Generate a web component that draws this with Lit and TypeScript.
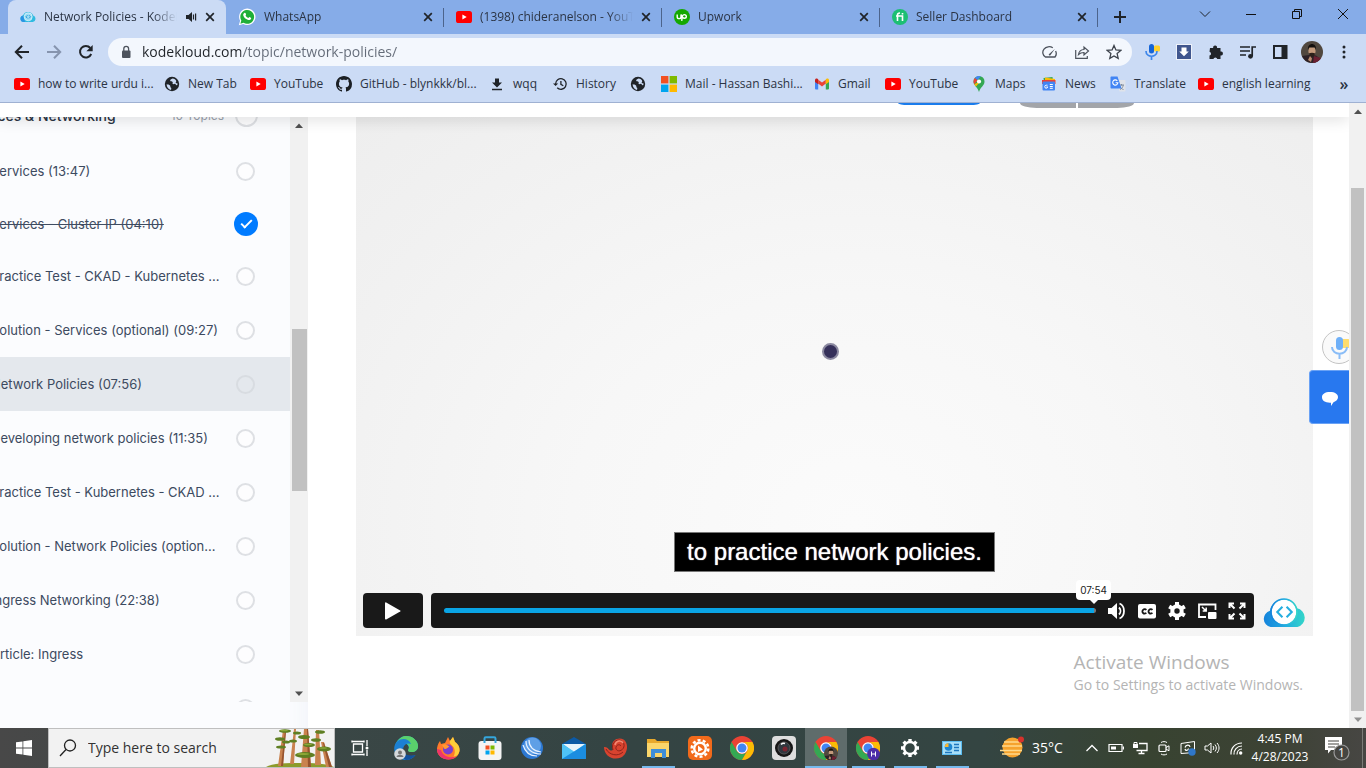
import { LitElement, html, svg, css, nothing, TemplateResult, SVGTemplateResult } from "lit";
import { customElement } from "lit/decorators.js";
import { classMap } from "lit/directives/class-map.js";
import { styleMap } from "lit/directives/style-map.js";

const icon = (size: number, box: number, body: SVGTemplateResult) => html`
  <svg width=${size} height=${size} viewBox="0 0 ${box} ${box}" fill="none" aria-hidden="true">${body}</svg>`;

const youtube = icon(16, 16, svg`
  <rect y="2" width="16" height="12" rx="2.6" fill="#f00"/><path d="M6.4 5.5v5L10.7 8z" fill="#fff"/>`);

const globe = icon(16, 16, svg`
  <circle cx="8" cy="8" r="7.2" fill="#202429"/>
  <path d="M2.6 8.2c1.4.2 2.6.3 3.4 1.2.8.8-.2 1.5.8 2.2.8.5.4 1.4.2 2.3C4.500 13.500 2.600 11 2.600 8.200z" fill="#cbdbf5"/>
  <path d="M8.600 2.600c-1.600.400-2.600 1.300-2.400 2.200.3 1 1.800.3 2.400 1.200.6.8-.6 1.500.2 2 .9.500 1.600-.6 2.600 0 .7.500.5 1.500 1.500 1.200.6-.3.600-1 .600-1.700-.7-.2-1.500 0-1.800-.7-.3-.8.800-.9.500-1.900-.4-1.200-2-2.300-3.600-2.300z" fill="#cbdbf5"/>`);

const cloudBody = (id: string) => svg`
  <defs><linearGradient id=${id} x1="0" y1="0" x2="1" y2="0">
    <stop offset="0" stop-color="#1583dc"/><stop offset=".55" stop-color="#24aee0"/><stop offset="1" stop-color="#34d6c8"/>
  </linearGradient></defs>
  <path d="M8 29a8 8 0 0 1-.6-15.600A13.500 13.500 0 0 1 33.500 11 9.200 9.200 0 0 1 34 29z" fill="url(#${id})"/>
  <circle cx="21" cy="14.500" r="12" fill="#fff"/>
  <circle cx="21" cy="14.500" r="12.600" stroke="url(#${id})" stroke-width="1.500"/>
  <path d="M19.500 9.500l-5 5 5 5M23.500 9.500l5 5-5 5" stroke="#24aee0" stroke-width="2"/>`;

const faviconCloud = icon(16, 16, svg`
  <path d="M3.600 13a3.300 3.300 0 0 1-.6-6.500A5.500 5.500 0 0 1 13.200 6.600 3.300 3.300 0 0 1 12.800 13z" fill="#2fbbe0"/>
  <path d="M3.600 13a3.300 3.300 0 0 1-.6-6.500l2 6.500z" fill="#2a93e4"/>
  <circle cx="8.200" cy="7.800" r="4" fill="#9fdcf3" stroke="#eaf9ff" stroke-width=".7"/>
  <path d="M7.500 6.200L6 7.800l1.500 1.600M9 6.200l1.500 1.600L9 9.400" stroke="#2a9ddc" stroke-width="1"/>`);

const whatsapp = icon(18, 18, svg`
  <path d="M.8 17.300l1.300-4.500A8.200 8.200 0 1 1 5.300 16z" fill="#fff"/>
  <path d="M2.400 15.700l.9-3.200a6.900 6.900 0 1 1 2.300 2.300z" fill="#1faf38"/>
  <path d="M6.300 5c.7-.5 1.300 0 1.700 1.200.2.700-.6 1-.3 1.500.6 1 1.300 1.700 2.500 2.200.5.200.8-1 1.300-.8 1.300.6 1.900 1 1.600 1.600-.5 1.200-1.900 1.600-3.400 1.100C7.600 11.100 6 9.500 5.300 7.500 5 6.500 5.500 5.500 6.300 5z" fill="#fff"/>`);

const upwork = icon(16, 16, svg`
  <circle cx="8" cy="8" r="8" fill="#14a800"/>
  <path d="M3.200 5.500v2.200c0 2.600 3.800 2.600 3.800 0V5.500c.8 2 1.700 3.700 3.300 3.700 2.700 0 2.700-3.600 0-3.600-2 0-2 1.600-2.600 6.200" stroke="#fff" stroke-width="1.400"/>`);

const fiverr = icon(16, 16, svg`
  <circle cx="8" cy="8" r="8" fill="#1dbf73"/>
  <path d="M5.500 12V6c0-1.600 1-2 2.500-2M4 7h6.500v5M10.500 4v1.500" stroke="#fff" stroke-width="1.600"/>`);

const closeX = icon(10, 10, svg`<path d="M1.200 1.200l7.600 7.600M8.800 1.200L1.200 8.800" stroke="#202429" stroke-width="1.700"/>`);

const chromeBody = svg`
  <circle cx="12" cy="12" r="12" fill="#ea4335"/>
  <path d="M1.600 6A12 12 0 0 0 12 24l5.200-9A6 6 0 0 1 6.800 15z" fill="#34a853"/>
  <path d="M22.400 6A12 12 0 0 1 12 24l5.200-9A6 6 0 0 0 12 6z" fill="#fbbc05"/>
  <circle cx="12" cy="12" r="5.800" fill="#fff"/><circle cx="12" cy="12" r="4.500" fill="#4285f4"/>`;

const portrait = (cx: number, cy: number, r: number) => svg`
  <circle cx=${cx} cy=${cy} r=${r} fill="#51483f"/>
  <g transform="translate(${cx} ${cy}) scale(${r / 11})">
    <path d="M-10 4A11 11 0 0 0 8.500 7L4 3.500-3 3z" fill="#2d2126"/>
    <path d="M2 4l7 2A11 11 0 0 1 1 11z" fill="#6b2032"/>
    <ellipse cx="0" cy="-1" rx="3.600" ry="5" fill="#c39a7c"/>
    <path d="M-4-2c-1-8 9-8 8 0L3-4.500h-6z" fill="#15110f"/>
    <path d="M-3.200 1.500C-2 6 2 6 3.200 1.500 1.500.5-1.500.5-3.200 1.500z" fill="#2c201a"/>
    <path d="M-2 4l2 2.500L-1 10l-3-2z" fill="#b98b6f"/>
  </g>`;

interface Tab { title: string; glyph: TemplateResult; active?: boolean; }
const tabs: Tab[] = [
  { title: "Network Policies - KodeKloud", glyph: faviconCloud, active: true },
  { title: "WhatsApp", glyph: whatsapp },
  { title: "(1398) chideranelson - YouTube", glyph: youtube },
  { title: "Upwork", glyph: upwork },
  { title: "Seller Dashboard", glyph: fiverr },
];

interface Bookmark { label: string; glyph: TemplateResult; width: number; }
const bookmarks: Bookmark[] = [
  { label: "how to write urdu i...", glyph: youtube, width: 150 },
  { label: "New Tab", glyph: globe, width: 86 },
  { label: "YouTube", glyph: youtube, width: 86 },
  { label: "GitHub - blynkkk/bl...", width: 153, glyph: icon(16, 16, svg`
    <path fill="#1b1f24" d="M8 0C3.580 0 0 3.580 0 8c0 3.540 2.290 6.530 5.470 7.590.4.070.55-.17.55-.38 0-.19-.01-.82-.01-1.490-2.010.37-2.530-.49-2.690-.94-.09-.23-.48-.94-.82-1.130-.28-.15-.68-.52-.01-.53.63-.01 1.080.58 1.230.82.72 1.210 1.870.87 2.330.66.070-.52.28-.87.51-1.070-1.780-.2-3.640-.89-3.640-3.950 0-.87.31-1.590.82-2.150-.08-.2-.36-1.020.08-2.120 0 0 .67-.21 2.200.82.64-.18 1.320-.27 2-.27s1.360.09 2 .27c1.530-1.040 2.200-.82 2.200-.82.44 1.100.16 1.920.08 2.120.51.56.82 1.270.82 2.150 0 3.070-1.870 3.750-3.650 3.950.29.25.54.73.54 1.480 0 1.070-.01 1.930-.01 2.200 0 .21.15.46.55.38A8.010 8.010 0 0 0 16 8c0-4.420-3.580-8-8-8z"/>`) },
  { label: "wqq", width: 63, glyph: icon(16, 16, svg`<path d="M6 2.500h4v4h3L8 11.500 3 6.500h3zM3 12.700h10v1.500H3z" fill="#202429"/>`) },
  { label: "History", width: 78, glyph: icon(16, 16, svg`
    <path d="M3.600 8A5.300 5.300 0 1 1 5.200 11.800M8.900 5v3.400l2.400 1.400" stroke="#202429" stroke-width="1.300"/><path d="M1 7.400h5.200L3.600 10z" fill="#202429"/>`) },
  { label: "", glyph: globe, width: 31 },
  { label: "Mail - Hassan Bashi...", width: 153, glyph: icon(16, 16, svg`
    <path d="M0 0h7.400v7.400H0z" fill="#f25022"/><path d="M8.600 0H16v7.400H8.600z" fill="#7fba00"/><path d="M0 8.600h7.400V16H0z" fill="#00a4ef"/><path d="M8.600 8.600H16V16H8.600z" fill="#ffb900"/>`) },
  { label: "Gmail", width: 71, glyph: icon(16, 16, svg`
    <path d="M1 4v8.600c0 .5.400.9.900.9h2.300V7.200z" fill="#4285f4"/><path d="M15 4v8.600c0 .5-.4.900-.9.900h-2.300V7.200z" fill="#34a853"/>
    <path d="M4.200 7.600V3.700L8 6.600l3.800-2.900v3.900L8 10.500z" fill="#ea4335"/><path d="M1 6V4c0-1.300 1.500-2 2.500-1.200l.7.500v5z" fill="#c5221f"/><path d="M15 6V4c0-1.300-1.500-2-2.500-1.200l-.7.500v5z" fill="#fbbc04"/>`) },
  { label: "YouTube", glyph: youtube, width: 86 },
  { label: "Maps", width: 70, glyph: icon(16, 16, svg`
    <path d="M8 0a5.500 5.500 0 0 0-5.500 5.500C2.500 9.500 6.600 11 8 16c1.400-5 5.500-6.500 5.500-10.500A5.500 5.500 0 0 0 8 0z" fill="#34a853"/>
    <path d="M8 0a5.500 5.500 0 0 0-4.200 2L6.500 4.200 9.800.3A5.500 5.500 0 0 0 8 0z" fill="#4285f4"/><path d="M3.800 2C2.200 3.800 2.100 6.500 3.300 8.300l3.200-4.100z" fill="#ea4335"/>
    <path d="M3.300 8.300l1.700 2.200 4.700-5.400z" fill="#fbbc04"/><circle cx="8" cy="5.500" r="2.100" fill="#fff"/>`) },
  { label: "News", width: 69, glyph: icon(16, 16, svg`
    <path d="M2.500 2l9-1 .5 5H3z" fill="#34a853"/><path d="M4 1.500l10 1.600V7H4z" fill="#fbbc04"/><path d="M1 4h13.500V8H1z" fill="#ea4335"/>
    <rect x="1.500" y="5.500" width="12.500" height="9" rx="1" fill="#4285f4"/><path d="M6.500 9.200H5.200a1.500 1.500 0 1 0 1.500 1.700H5.500M8.800 8.500h3M8.800 10.500h3M8.800 12.300h3" stroke="#fff"/>`) },
  { label: "Translate", width: 88, glyph: icon(16, 16, svg`
    <path d="M6 4h8.500c.6 0 1 .4 1 1v9.500c0 .6-.4 1-1 1H9.500z" fill="#dfe3ea"/><path d="M9 9h5M11.500 8v1.500M10 13.500c2-1 3-2.500 3.200-4.500M10 10.500c.6 1.500 1.700 2.500 3.500 3" stroke="#7b8796" stroke-width=".9"/>
    <path d="M1.500.5h6l4 12h-10c-.6 0-1-.4-1-1v-10c0-.6.400-1 1-1z" fill="#4285f4"/><path d="M7.300 4.800a2.600 2.600 0 1 0 .6 2H5.600" stroke="#fff" stroke-width="1.100"/>`) },
  { label: "english learning", glyph: youtube, width: 120 },
];

interface Lesson { title: string; done?: boolean; current?: boolean; }
const lessons: Lesson[] = [
  { title: "Services (13:47)" },
  { title: "Services - Cluster IP (04:10)", done: true },
  { title: "Practice Test - CKAD - Kubernetes ..." },
  { title: "Solution - Services (optional) (09:27)" },
  { title: "Network Policies (07:56)", current: true },
  { title: "Developing network policies (11:35)" },
  { title: "Practice Test - Kubernetes - CKAD ..." },
  { title: "Solution - Network Policies (option..." },
  { title: "Ingress Networking (22:38)" },
  { title: "Article: Ingress" },
  { title: "" },
];

@customElement("browser-chrome")
class BrowserChrome extends LitElement {
  static styles = css`
    :host { display: block; font: 12px/16px "Open Sans", "Noto Sans", sans-serif; color: #2b3444; }
    * { box-sizing: border-box; }
    svg { display: block; flex: none; }
    button { border: 0; padding: 0; background: none; font: inherit; color: inherit; display: flex; align-items: center; justify-content: center; }
    .strip { display: flex; height: 34px; background: #86ace8; padding-left: 8px; }
    .tab { flex: 0 1 218px; min-width: 0; display: flex; align-items: center; gap: 8px; padding: 0 11px 0 12px; position: relative; }
    .tab:not(.active)::after { content: ""; position: absolute; right: 0; top: 8px; height: 19px; width: 1px; background: #4c648c; }
    .tab.active { background: #cbdbf5; border-radius: 8px 8px 0 0; }
    .name { flex: 1; overflow: hidden; white-space: nowrap; mask-image: linear-gradient(to right, #000 calc(100% - 24px), transparent); }
    .plus { width: 44px; }
    .window { display: flex; margin-left: auto; }
    .window button { width: 46px; height: 28px; }
    .bar { display: flex; height: 36px; align-items: center; background: #cbdbf5; padding-left: 6px; }
    .nav { width: 32px; height: 32px; }
    .omni { flex: 1; height: 28px; margin: 0 4px 0 6px; border-radius: 14px; background: #f3f7fd; display: flex; align-items: center; padding-left: 10px; }
    .omni input { flex: 1; min-width: 0; border: 0; outline: 0; padding: 0; margin-left: 8px; font: 14px/20px "Open Sans", "Noto Sans", sans-serif;
      color: transparent; background: linear-gradient(to right, #202429 99px, #636b78 99px); background-clip: text; -webkit-background-clip: text; }
    .omni button { width: 32px; height: 28px; }
    .omni button:last-child { margin-right: 2px; }
    .ext { width: 32px; height: 32px; }
    .menu { margin-right: 6px; }
    .marks { display: flex; height: 33px; background: #cbdbf5; border-bottom: 1px solid #9fb1d2; padding: 0 8px 4px 14px; align-items: center; }
    .mark { display: flex; gap: 8px; align-items: center; color: inherit; text-decoration: none; white-space: nowrap; flex: none; }
    .more { margin-left: auto; width: 28px; font-size: 16px; font-weight: 600; }
  `;

  render() {
    const nav = (label: string, path: string, color = "#202429") => html`
      <button class="nav" aria-label=${label}>${icon(16, 16, svg`<path d=${path} stroke=${color} stroke-width="2"/>`)}</button>`;
    return html`
      <div class="strip">
        ${tabs.map((t) => html`
          <div class=${classMap({ tab: true, active: !!t.active })}>
            ${t.glyph}<span class="name">${t.title}</span>
            ${t.active ? icon(12, 12, svg`<path d="M1 4h2.500L7 1v10L3.500 8H1z" fill="#202429"/><path d="M8.500 3.500v5M10.600 2.500v7" stroke="#202429" stroke-width="1.200"/>`) : nothing}
            <button aria-label="Close ${t.title}">${closeX}</button>
          </div>`)}
        <button class="plus" aria-label="New tab">${icon(12, 12, svg`<path d="M6 0v12M0 6h12" stroke="#202429" stroke-width="2"/>`)}</button>
        <div class="window">
          <button aria-label="Search tabs">${icon(12, 12, svg`<path d="M1 3.500l5 5 5-5" stroke="#202429"/>`)}</button>
          <button aria-label="Minimize">${icon(10, 10, svg`<path d="M0 5.500h10" stroke="#111"/>`)}</button>
          <button aria-label="Restore">${icon(10, 10, svg`<path d="M.5 2.500h7v7h-7zM2.500 2.500v-2h7v7h-2" stroke="#111"/>`)}</button>
          <button aria-label="Close window">${icon(10, 10, svg`<path d="M0 0l10 10M10 0L0 10" stroke="#111"/>`)}</button>
        </div>
      </div>
      <div class="bar">
        ${nav("Back", "M15 8H2.500M8 1.800L1.800 8 8 14.200")}
        ${nav("Forward", "M1 8h12.500M8 1.800L14.200 8 8 14.200", "#8694ae")}
        <button class="nav" aria-label="Reload">${icon(16, 16, svg`<path d="M13.200 10A5.800 5.800 0 1 1 12.300 4" stroke="#202429" stroke-width="2"/><path d="M14.700 1v6.300H8.400z" fill="#202429"/>`)}</button>
        <div class="omni">
          ${icon(16, 16, svg`<rect x="4" y="6.500" width="8.500" height="7.500" rx="1" fill="#4d535d"/><path d="M5.800 7V4.800a2.400 2.400 0 0 1 4.800 0V7" stroke="#4d535d" stroke-width="1.300"/>`)}
          <input aria-label="Address" value="kodekloud.com/topic/network-policies/" />
          <button aria-label="Page speed">${icon(16, 16, svg`<path d="M10.800 3.800A6.200 5.600 0 0 0 3.400 13h9.600A5.600 5.600 0 0 0 13.600 7" stroke="#4d535d" stroke-width="1.300"/><path d="M6.800 10.200l6-5.200-4.600 6.400a1 1 0 0 1-1.400-1.200z" fill="#4d535d"/>`)}</button>
          <button aria-label="Share">${icon(16, 16, svg`<path d="M1.700 6v8.300h11.600V12M4.500 10.500c.5-3.200 2-4.800 5.500-5V3l4.500 4L10 11V8.500c-2.500 0-4 .5-5.500 2z" stroke="#4d535d" stroke-width="1.200"/>`)}</button>
          <button aria-label="Bookmark">${icon(16, 16, svg`<path d="M8 1.500l1.900 4.500 4.900.4-3.700 3.200 1.100 4.800L8 11.900l-4.200 2.500 1.100-4.800L1.200 6.400 6.100 6z" stroke="#3c424b" stroke-width="1.300"/>`)}</button>
        </div>
        <button class="ext" aria-label="Voice typing">${icon(16, 16, svg`<rect x="10" y="1.500" width="6" height="6" rx="1.500" fill="#ffd12e"/><rect x="5" y="0" width="5" height="9.500" rx="2.500" fill="#1565d8"/><path d="M2 7c0 7 11 7 11 0M7.500 12.300V16" stroke="#3d86ea" stroke-width="1.700"/>`)}</button>
        <button class="ext" aria-label="Downloader">${icon(16, 16, svg`<rect x=".5" y=".5" width="15" height="15" fill="#40568e" stroke="#eef2fa"/><path d="M5.500 3.500h5v4h2.300L8 12.200 3.200 7.500h2.300z" fill="#fff"/>`)}</button>
        <button class="ext" aria-label="Extensions">${icon(16, 16, svg`<path d="M2 4h3.200a2 2 0 1 1 3.800 0h3.500v3.500a2 2 0 1 1 0 3.900V15H9.300a2 2 0 0 0-3.900 0H1.500v-3.400a2 2 0 0 0 0-3.900z" fill="#202429"/>`)}</button>
        <button class="ext" aria-label="Media">${icon(16, 16, svg`<path d="M0 3h10M0 7h10M0 11h6M12.200 12V3H16" stroke="#202429" stroke-width="1.700"/><circle cx="10.500" cy="12.300" r="2.400" fill="#202429"/>`)}</button>
        <button class="ext" aria-label="Side panel">${icon(16, 16, svg`<rect x="2" y="2" width="12.500" height="12" stroke="#202429" stroke-width="2"/><path d="M9.500 2h5v12h-5z" fill="#202429"/>`)}</button>
        <button class="ext" aria-label="Profile">${icon(22, 22, portrait(11, 11, 11))}</button>
        <button class="ext menu" aria-label="Menu">${icon(16, 16, svg`<circle cx="8" cy="3" r="1.500" fill="#202429"/><circle cx="8" cy="8" r="1.500" fill="#202429"/><circle cx="8" cy="13" r="1.500" fill="#202429"/>`)}</button>
      </div>
      <nav class="marks">
        ${bookmarks.map((b) => html`<a class="mark" href="#" aria-label=${b.label || "Bookmark"} style=${styleMap({ width: `${b.width}px` })}>${b.glyph}<span>${b.label}</span></a>`)}
        <button class="more" aria-label="More bookmarks">»</button>
      </nav>`;
  }
}

@customElement("lesson-list")
class LessonList extends LitElement {
  static styles = css`
    :host { display: flex; flex-direction: column; flex: 0 0 308px; background: #fbfcfe; padding-bottom: 26px; font: 13px/20px Inter, sans-serif; color: #3c4a60; min-height: 0; box-shadow: inset -24px 0 18px -18px #f3f5fa; }
    * { box-sizing: border-box; }
    .scroller { flex: 1; min-height: 0; display: flex; overflow: hidden; }
    .items { flex: 1; min-width: 0; overflow: hidden; }
    .row { height: 54px; display: flex; align-items: center; padding-right: 35px; }
    .row.done { height: 51px; }
    .row.current { background: #e4e8ed; }
    .row a { flex: 1; margin-left: -9px; color: inherit; text-decoration: none; white-space: nowrap; }
    .row.done a { text-decoration: line-through; color: #3f4c61; }
    .row.head { height: 27px; font-size: 14px; color: #2b3444; margin-top: -15px; margin-bottom: 15px; }
    .row.head a { margin-left: -37px; font-weight: 500; }
    .count { font-size: 12px; color: #9aa1ac; margin-right: 11px; }
    input { appearance: none; flex: none; margin: 0; width: 19px; height: 19px; border: 2px solid #dee0e4; border-radius: 50%; background: #fdfdfe; }
    .head input { width: 23px; height: 23px; margin-right: -3px; }
    .current input { background: none; border-color: #d8dce1; }
    input:checked { width: 24px; height: 24px; border: 0; background: #007bff; display: grid; place-items: center; margin-right: -3px; }
    input:checked::before { content: ""; box-sizing: border-box; width: 11px; height: 6px; border: solid #fff; border-width: 0 0 2px 2px; transform: rotate(-45deg) translate(1px, -1px); }
    .track { flex: 0 0 18px; background: #f1f1f1; display: flex; flex-direction: column; align-items: center; }
    .space { flex: 195; }
    .thumb { flex: 162; width: 15px; background: #c1c1c1; }
    .rest { flex: 194; }
    .arrow { height: 17px; width: 17px; display: grid; place-items: center; }
  `;
  render() {
    return html`
      <div class="scroller">
        <div class="items">
          <div class="row head"><a href="#">Services &amp; Networking</a><span class="count">10 Topics</span><input type="checkbox" aria-label="Services and Networking complete" /></div>
          ${lessons.map((l) => html`
            <div class=${classMap({ row: true, done: !!l.done, current: !!l.current })}>
              <a href="#">${l.title}</a><input type="checkbox" .checked=${!!l.done} aria-label="${l.title || "Lesson"} complete" />
            </div>`)}
        </div>
        <div class="track">
          <div class="arrow">${icon(8, 8, svg`<path d="M4 1.500L8 6H0z" fill="#505050"/>`)}</div>
          <div class="space"></div><div class="thumb"></div><div class="rest"></div>
          <div class="arrow">${icon(8, 8, svg`<path d="M4 6L0 1.500h8z" fill="#505050"/>`)}</div>
        </div>
      </div>`;
  }
}

@customElement("lesson-video")
class LessonVideo extends LitElement {
  static styles = css`
    :host { display: flex; flex-direction: column; position: relative; height: 519px; background: radial-gradient(ellipse at 52% 78%, #fbfbfb 0, #f7f7f7 40%, #f1f1f1 78%, #eeeeee 100%); }
    * { box-sizing: border-box; }
    svg { display: block; }
    button { border: 0; padding: 0; background: none; display: grid; place-items: center; }
    .pointer { position: absolute; left: 466px; top: 226px; width: 17px; height: 17px; border-radius: 50%; background: #35305a; border: 2px solid #8b89a0; }
    .caption { margin: auto auto 21px; border: 1px solid #777; background: #000; color: #fff; font: 24px/38px "Liberation Sans", Arial, sans-serif; padding: 0 12px; text-shadow: 0 0 1px #fff; }
    .controls { display: flex; align-items: center; padding: 0 7px 8px; }
    .play { width: 60px; height: 35px; border-radius: 4px; background: #191919; margin-right: 8px; }
    .bar { flex: 1; height: 35px; border-radius: 4px; background: #191919; display: flex; align-items: center; padding: 0 2px 0 13px; position: relative; }
    .seek { flex: 1; position: relative; display: flex; margin-right: 6px; }
    .seek input { appearance: none; width: 100%; height: 5px; margin: 0; border-radius: 3px; background: linear-gradient(to right, #0aa5e6 calc(100% - 2px), #777 calc(100% - 2px)); }
    .seek input::-webkit-slider-thumb { appearance: none; width: 1px; height: 1px; background: transparent; }
    .time { position: absolute; right: -15px; bottom: 13px; background: #fff; color: #222; border-radius: 4px; padding: 0 4px; font: 10px/20px Inter, sans-serif; }
    .time::after { content: ""; position: absolute; left: 50%; top: 100%; margin-left: -4px; border: 4px solid transparent; border-top-color: #fff; border-bottom: 0; }
    .bar button { width: 30px; height: 35px; }
    .brand { margin-left: 8px; margin-top: 4px; }
  `;
  render() {
    return html`
      <span class="pointer"></span>
      <div class="caption">to practice network policies.</div>
      <div class="controls">
        <button class="play" aria-label="Play">${icon(20, 20, svg`<path d="M2 2.200v15.600c0 .7.600 1 1.200.7l14-8c.5-.3.500-.8 0-1.100l-14-8C2.600 1.100 2 1.500 2 2.200z" fill="#fff"/>`)}</button>
        <div class="bar">
          <div class="seek"><input type="range" aria-label="Progress" max="476" value="474" /><span class="time">07:54</span></div>
          <button aria-label="Volume">${icon(20, 20, svg`<path d="M1 7h3.500L10 2v16l-5.500-5H1z" fill="#fff"/><path d="M12 6.500c2 2 2 5 0 7M12.500 2.500c6 2.500 6 12.500 0 15" stroke="#fff" stroke-width="1.800"/>`)}</button>
          <button aria-label="Captions">${icon(20, 20, svg`<rect x="1" y="3" width="18" height="14.500" rx="2" fill="#fff"/><path d="M9.300 9a2.200 2.200 0 1 0 0 2.800M15.400 9a2.200 2.200 0 1 0 0 2.800" stroke="#191919" stroke-width="1.800"/>`)}</button>
          <button aria-label="Settings">${icon(20, 20, svg`<circle cx="10" cy="10" r="4.700" stroke="#fff" stroke-width="4"/><path d="M10 1v4M10 15v4M2.200 5.500l3.500 2M14.300 12.500l3.500 2M17.800 5.500l-3.500 2M5.700 12.500l-3.500 2" stroke="#fff" stroke-width="4"/>`)}</button>
          <button aria-label="Picture in picture">${icon(20, 20, svg`<path d="M9 16H2V3.500h16.500V9" stroke="#fff" stroke-width="1.800"/><rect x="11" y="11" width="8.500" height="7" rx="1" fill="#fff"/><path d="M5 6l4 4M9.200 6.500V10H5.700" stroke="#fff" stroke-width="1.500"/>`)}</button>
          <button aria-label="Fullscreen">${icon(20, 20, svg`<path d="M2.500 7V2.500H7M13 2.500h4.500V7M17.500 13v4.500H13M7 17.500H2.500V13M2.500 2.500l5 5M17.500 2.500l-5 5M17.500 17.500l-5-5M2.500 17.500l5-5" stroke="#fff" stroke-width="2"/>`)}</button>
        </div>
        <svg class="brand" width="44" height="31" viewBox="0 0 42 30" fill="none" aria-hidden="true">${cloudBody("cloud")}</svg>
      </div>`;
  }
}

@customElement("task-bar")
class TaskBar extends LitElement {
  static styles = css`
    :host { display: flex; height: 40px; background: linear-gradient(to right, #484848 0, #3b4746 22%, #344443 45%, #344542 72%, #384331 84%, #3c4234 93%, #474643 100%); color: #fff; font: 12px/16px "Open Sans", "Noto Sans", sans-serif; }
    * { box-sizing: border-box; }
    svg { display: block; }
    button { border: 0; padding: 0; background: none; color: inherit; font: inherit; display: grid; place-items: center; flex: none; }
    .start { width: 48px; }
    .search { flex: 0 0 287px; display: flex; align-items: center; background: #f2f2f2; border: 1px solid #bfbfbf; padding-left: 10px; }
    .search input { flex: 1; min-width: 0; border: 0; outline: 0; background: none; padding: 0; margin-left: 11px; font: 14px/20px "Open Sans", "Noto Sans", sans-serif; }
    .search input::placeholder { color: #333; opacity: 1; }
    .apps { display: flex; flex: 1; }
    .apps button { width: 42px; position: relative; }
    .apps button:first-child { width: 50px; }
    .open::after { content: ""; position: absolute; left: 5px; right: 4px; bottom: 0; height: 2px; background: #76b9ed; }
    .front { background: #5f6c6b; }
    .front::after { left: 0; right: 0; }
    .weather { display: flex; align-items: center; gap: 8px; font-size: 14px; width: 80px; }
    .tray { display: flex; }
    .tray button { width: 24px; }
    .clock { width: 64px; text-align: center; }
    .clock span { display: block; line-height: 18px; }
    .note { width: 50px; }
    .peek { width: 4px; border-left: 1px solid #7b7b77; }
  `;

  render() {
    const tray = (label: string, body: SVGTemplateResult) => html`<button aria-label=${label}>${icon(16, 16, body)}</button>`;
    const app = (label: string, body: SVGTemplateResult, state = "") => html`<button class=${state} aria-label=${label}>${icon(24, 24, body)}</button>`;
    return html`
      <button class="start" aria-label="Start">${icon(16, 16, svg`<path d="M0 2.300l6.500-.9v6.100H0zM7.300 1.300L16 0v7.500H7.300zM0 8.400h6.500v6.200L0 13.700zM7.300 8.400H16V16l-8.700-1.200z" fill="#fff"/>`)}</button>
      <label class="search">
        ${icon(18, 18, svg`<circle cx="11" cy="6.500" r="5.500" stroke="#222" stroke-width="1.300"/><path d="M7 10.500L1 17" stroke="#222" stroke-width="1.300"/>`)}
        <input aria-label="Search" placeholder="Type here to search" />
        <svg width="68" height="38" viewBox="0 0 68 38" fill="none" aria-hidden="true">
          <path d="M0 38c6-4 20-4 38-4 14 0 24 1 30 4z" fill="#8c9b2b"/>
          <path d="M12 37L17 1h3l-3 36zM24 35L28 0h2l-2 35zM35 38L38 0h4l3 38zM49 36L50 1h3l2 35zM60 38L55 13h3l8 25z" fill="#c9824e"/>
          <path d="M41 0h1l3 38h-3zM19 2h1l-3 35h-2zM57 14h1l8 24h-3z" fill="#96532e"/>
          <g fill="#5f7f22"><ellipse cx="19" cy="2" rx="6" ry="1.800"/><ellipse cx="14" cy="10" rx="5" ry="1.800"/><ellipse cx="20" cy="13" rx="4" ry="1.500"/><ellipse cx="15" cy="18" rx="5" ry="1.600"/><ellipse cx="31" cy="4" rx="4" ry="1.500"/><ellipse cx="27" cy="12" rx="4" ry="1.600"/><ellipse cx="38" cy="8" rx="6" ry="2"/><ellipse cx="43" cy="16" rx="6" ry="2"/><ellipse cx="39" cy="26" rx="10" ry="3"/><ellipse cx="54" cy="3" rx="5" ry="1.800"/><ellipse cx="50" cy="11" rx="5" ry="1.800"/><ellipse cx="58" cy="20" rx="7" ry="2.400"/></g>
          <g fill="#8da838"><ellipse cx="18" cy="1.500" rx="4" ry=".8"/><ellipse cx="42" cy="15.500" rx="4" ry=".8"/><ellipse cx="37" cy="25" rx="6" ry="1"/><ellipse cx="57" cy="19" rx="4" ry=".8"/></g>
        </svg>
      </label>
      <div class="apps">
        ${app("Task view", svg`<path d="M5.500 8h9v8h-9zM4 4.500v2M4 5.500h12M4 19.500v-2M4 18.500h12M16 4.500v2M16 17.500v2M19 4v6M19 14v6" stroke="#fff" stroke-width="1.300"/><circle cx="19" cy="12" r="1.500" fill="#fff"/>`)}
        ${app("Edge", svg`<path d="M1 11C2 4 7 0 12 0c7 0 12 5 12 10 0 4-3 6-6.500 6-3 0-4-1.300-3-2.700C16 10.500 13 7 9 7c-4 0-7 2-8 4z" fill="#38c8b8"/><path d="M12 0c7 0 12 5 12 10 0 4-3 6-6.500 6-3 0-4-1.300-3-2.700C17 9 13 4 5 4c2-2.500 4-4 7-4z" fill="#5ad06c"/><path d="M.2 12C1 2 14 0 17 8c-7-3-10 6-6.500 10 3 2.500 8 2.500 11 1C19 22.500 15.500 24 12 24 5 24 0 19 .2 12z" fill="#1c80d4"/><path d="M9 11c-2 6 4 10 12.500 8C19 22.500 15.500 24 12 24c-4-2-6-8-3-13z" fill="#12519c"/><circle cx="6" cy="18" r="5.800" fill="#d5d9dc"/><circle cx="6" cy="16.500" r="2" fill="#777"/><path d="M2.500 21c.5-3 6.500-3 7 0z" fill="#777"/>`)}
        ${app("Firefox", svg`<path d="M12 1l2 4 3-4 2 5c3 2 5 5 4.500 9-.8 5-5 8.500-11 8.500S1.500 19.500 1 14.500c-.3-3.500 1-7 3-9.500l1 3 4-1z" fill="#ff7a2a"/><path d="M17 1l2 5c3 2 5 5 4.500 9-1 4-3 5-6 6 2-4 2-9-2-12-2-2-2-3-1.500-4z" fill="#ffcf3a"/><path d="M1 13c0 6 5 10.500 11.500 10.500 3 0 6-1 7.500-3-6 2-13 0-15-6.500z" fill="#f0336c"/><circle cx="12" cy="13.500" r="5" fill="#7a3fd0"/><path d="M6 9c3-2 6 0 7.500 2-2 0-2 2-5 2z" fill="#ff9a30"/>`)}
        ${app("Store", svg`<rect x=".5" y="5" width="23" height="19" rx="3" fill="#f4f4f4"/><path d="M6.500 7V2.500c0-.8.500-1.300 1.300-1.300h8.400c.8 0 1.300.5 1.300 1.300V7" stroke="#35a6dc" stroke-width="2"/><path d="M7.500 9.500h4v4h-4z" fill="#f25022"/><path d="M12.500 9.500h4v4h-4z" fill="#7fba00"/><path d="M7.500 14.500h4v4h-4z" fill="#00a4ef"/><path d="M12.500 14.500h4v4h-4z" fill="#ffb900"/>`)}
        ${app("Downloader", svg`<circle cx="12" cy="12" r="11" fill="#2c78d2"/><circle cx="12.500" cy="10" r="8.500" fill="#5f9fe6"/><path d="M6 5c0 8 6 13 15 13M9 4c0 7 5 11 12 12M3 9c2 7 7 11 14 11" stroke="#eaf3ff" stroke-width="1.200"/>`)}
        ${app("Mail", svg`<path d="M0 8l12-7 12 7v3H0z" fill="#0c5aa6"/><path d="M0 8h24v15H0z" fill="#35b4f0"/><path d="M1 8h22L12 16z" fill="#e8f4fc"/><path d="M0 8v15L24 8 12 15.500z" fill="#4fc3f7"/><path d="M0 23L24 8v15z" fill="#1b8de0"/>`)}
        ${app("Nautilus", svg`<path d="M0 11c4-1 5 5 9 3C5 5 14 0 19.500 3.500 25 7 24 18 17 21.500 9 25 0 20 0 11z" fill="#d8432f"/><path d="M9 14c-3-8 6-13 10-8 4 6-4 12-7 7-1-3 3-6 5-3M2 13c3 6 12 8 17 3" stroke="#8e231a"/><path d="M11 9c1-5 7-5 8-2" stroke="#f58a73" stroke-width="1.500"/>`)}
        ${app("File Explorer", svg`<path d="M1 3h8l2 2h12v16H1z" fill="#e8a92c"/><path d="M1 7h22v14H1z" fill="#fbd66b"/><path d="M5 22v-9h15v9h-4v-5H9v5z" fill="#3e8ed8"/>`, "open")}
        ${app("Video editor", svg`<rect width="24" height="24" rx="5" fill="#f26a1b"/><circle cx="12" cy="12.500" r="8.300" stroke="#fff" stroke-width="2.500" stroke-dasharray="3 2.200"/><circle cx="12" cy="12.500" r="5.800" stroke="#fff" stroke-width="2.400"/><path d="M10 9.500l5 4-5 2.500z" fill="#fff"/>`)}
        ${app("Chrome", chromeBody)}
        ${app("Camera", svg`<rect width="24" height="24" rx="4" fill="#dedede"/><circle cx="12" cy="12" r="9" fill="#161616"/><circle cx="12" cy="12" r="6" fill="#30383f" stroke="#555"/><path d="M9 8.500a4 4 0 0 1 4-1" stroke="#fff" stroke-width="1.500"/><circle cx="13" cy="13" r="2.500" fill="#7b2530"/>`)}
        ${app("Chrome profile 1", svg`${chromeBody}${portrait(17, 17.5, 7)}`, "open front")}
        ${app("Chrome profile 2", svg`${chromeBody}<circle cx="17.500" cy="18" r="6.300" fill="#4d2da8"/><path d="M15.500 15.500v5M19.500 15.500v5M15.500 18h4" stroke="#fff"/>`, "open")}
        ${app("Settings", svg`<circle cx="12" cy="12" r="6" stroke="#fff" stroke-width="2.400"/><path d="M12 3v3M12 18v3M3 12h3M18 12h3M5.600 5.600l2.200 2.200M16.200 16.200l2.200 2.200M18.400 5.600l-2.200 2.200M7.800 16.200l-2.200 2.200" stroke="#fff" stroke-width="3.400"/>`, "open")}
        ${app("Control panel", svg`<rect x="2" y="5" width="20" height="14" fill="#5bbcf0"/><rect x="3" y="6" width="18" height="12" fill="#a7dff9"/><circle cx="8.500" cy="11" r="3.800" fill="#1e86cf"/><path d="M8.500 11V7.200A3.800 3.800 0 0 0 4.700 11z" fill="#f7b733"/><path d="M14 8.500h5M14 11.500h5M14 14.500h5M5 16.500h7" stroke="#1e76bd" stroke-width="1.300"/>`, "open")}
      </div>
      <div class="weather">
        ${icon(24, 24, svg`<circle cx="12.500" cy="11.500" r="10" fill="#f6a32d"/><path d="M4 6h15M2 10h20M0 14.500h22M2 18h18" stroke="#ffd98a" stroke-width="1.700"/><circle cx="21" cy="3.500" r="3" fill="#d6322c"/>`)}
        <span>35°C</span>
      </div>
      <div class="tray">
        ${tray("Hidden icons", svg`<path d="M2.500 11L8 5.500l5.500 5.500" stroke="#fff" stroke-width="1.300"/>`)}
        ${tray("Battery", svg`<path d="M1 4.500h13v7H1zM15.500 6.500v3" stroke="#fff" stroke-width="1.200"/><path d="M3 6.500h5v3H3z" fill="#fff"/>`)}
        ${tray("Display", svg`<path d="M7 3.500h8v7H4.500M9.500 10.500v3M6.500 13.500h6" stroke="#fff" stroke-width="1.300"/><rect x="1" y="4" width="5" height="4" fill="#fff"/><path d="M2 4V2.500h3V4" stroke="#fff"/>`)}
        ${tray("Meet now", svg`<rect x="3" y="5" width="7" height="6.500" rx="1" stroke="#fff" stroke-width="1.200"/><path d="M10 7.500l3-1.700v5l-3-1.700M5 2.500c2-1.200 4-1.200 6 0M5 14c2 1.200 4 1.200 6 0" stroke="#fff"/>`)}
        ${tray("Sync", svg`<path d="M1 3.500L14.500 1.500v11L1 13.500z" stroke="#fff"/><path d="M5 7.500C6 4.500 9.500 4.500 10 7M8.500 8.500C8 11 5.500 11 5 9" stroke="#fff" stroke-width="1.200"/><circle cx="12" cy="12" r="3.700" fill="#2f77c9"/>`)}
        ${tray("Volume", svg`<path d="M1 6h2.500L7 3v10L3.500 10H1z" stroke="#fff"/><path d="M9 6c1 1.200 1 2.800 0 4M11 4.500c1.800 2 1.800 5 0 7M13 3c2.700 3 2.700 7 0 10" stroke="#fff"/>`)}
        ${tray("Network", svg`<path d="M3 14.500C2.500 8 7 3 14 3M6 14.500C5.500 10 9 6 14 6M9 14.500C9 11.500 11 9 14 9" stroke="#fff" stroke-width="1.200"/><circle cx="12.700" cy="13" r="1.700" fill="#fff"/>`)}
      </div>
      <button class="clock"><div><span>4:45 PM</span><span>4/28/2023</span></div></button>
      <button class="note" aria-label="1 new notification">
        <svg width="26" height="26" viewBox="0 0 26 26" fill="none" aria-hidden="true"><path d="M1 2h17v13H7l-3 3.500V15H1z" fill="#fff"/><path d="M4 6h11M4 9h11M4 12h7" stroke="#454541" stroke-width="1.200"/><circle cx="17.500" cy="17.500" r="7.500" fill="#454541" stroke="#999" stroke-width="1.200"/><text x="17.500" y="22" text-anchor="middle" font-size="12" fill="#fff">1</text></svg>
      </button>
      <div class="peek"></div>`;
  }
}

@customElement("app-root")
class AppRoot extends LitElement {
  static styles = css`
    :host { display: flex; flex-direction: column; height: 100vh; overflow: hidden; background: #fff; }
    * { box-sizing: border-box; }
    svg { display: block; }
    .view { flex: 1; min-height: 0; display: flex; }
    .site { flex: 1; min-width: 0; display: flex; flex-direction: column; position: relative; overflow: hidden; }
    .top { flex: none; height: 14px; background: #fff; box-shadow: 0 2px 16px rgba(0, 0, 0, 0.14); position: relative; z-index: 1; display: flex; justify-content: flex-end; align-items: flex-start; padding-right: 215px; }
    .pill { width: 82px; height: 2px; background: #1a7cec; border-radius: 0 0 20px 20px / 0 0 4px 4px; margin-right: 40px; }
    .half { width: 56px; height: 5px; background: #a3a5a9; border-radius: 0 0 0 20px / 0 0 0 6px; }
    .half + .half { border-radius: 0 0 20px 0 / 0 0 6px 0; margin-left: 2px; }
    .body { flex: 1; min-height: 0; display: flex; }
    .main { flex: 1; min-width: 0; padding: 0 36px 0 48px; }
    .voice { position: absolute; right: -7px; top: 227px; width: 34px; height: 34px; border: 1px solid #c4c4c4; border-radius: 50%; background: #fafafa; padding: 0; display: grid; place-items: center; }
    .chat { position: absolute; right: 0; top: 267px; width: 40px; height: 54px; border: 1px solid #6aa2f5; border-right: 0; border-radius: 4px 0 0 4px; background: #2878ef; padding: 2px 0 0; display: grid; place-items: center; }
    .track { flex: 0 0 17px; background: #f1f1f1; display: flex; flex-direction: column; align-items: center; }
    .arrow { height: 17px; display: grid; place-items: center; }
    .space { flex: 68; }
    .thumb { flex: 523; width: 13px; background: #c1c1c1; }
    .notice { position: absolute; right: 46px; bottom: 32px; color: #b4b4b4; font: 14px/22px "Open Sans", "Noto Sans", sans-serif; }
    .notice strong { display: block; font-weight: 400; font-size: 19px; line-height: 24px; }
  `;
  render() {
    return html`
      <browser-chrome></browser-chrome>
      <div class="view">
        <div class="site">
          <div class="top"><span class="pill"></span><span class="half"></span><span class="half"></span></div>
          <div class="body">
            <lesson-list></lesson-list>
            <main class="main"><lesson-video></lesson-video></main>
          </div>
          <button class="voice" aria-label="Voice typing">${icon(26, 26, svg`<rect x="15" y="5" width="9" height="9" rx="2" fill="#fddc6c"/><rect x="10" y="3" width="7" height="13" rx="3.500" fill="#6fb0f8"/><path d="M6 13c0 9 15 9 15 0M13.500 20v5" stroke="#8abdf7" stroke-width="2"/>`)}</button>
          <button class="chat" aria-label="Chat">${icon(18, 18, svg`<path d="M9 3c5 0 8 2 8 5.300 0 2.200-1.800 4-4.500 5L10 17v-3.300C4.500 14 1 12 1 8.300 1 5 4 3 9 3z" fill="#fff"/>`)}</button>
          <div class="notice"><strong>Activate Windows</strong>Go to Settings to activate Windows.</div>
        </div>
        <div class="track">
          <div class="arrow">${icon(8, 8, svg`<path d="M4 1.500L8 6H0z" fill="#505050"/>`)}</div>
          <div class="space"></div><div class="thumb"></div>
          <div class="arrow">${icon(8, 8, svg`<path d="M4 6L0 1.500h8z" fill="#909090"/>`)}</div>
        </div>
      </div>
      <task-bar></task-bar>`;
  }
}
